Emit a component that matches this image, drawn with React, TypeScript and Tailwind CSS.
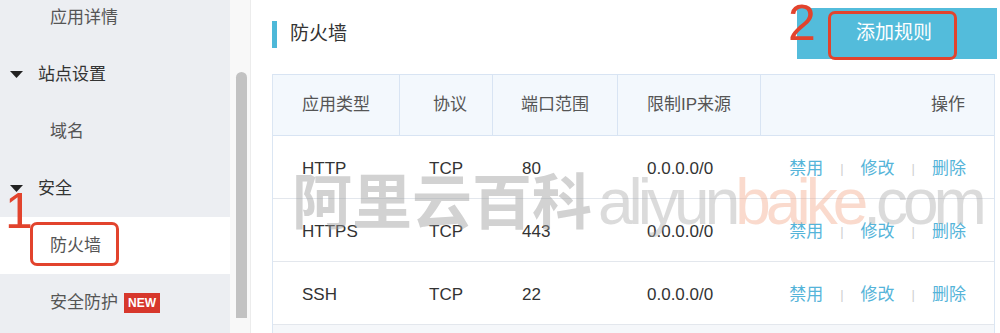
import React from "react";

const font = { fontFamily: '"Liberation Sans", "Noto Sans CJK SC", sans-serif' };

function Caret() {
  return (
    <svg width="13" height="7" viewBox="0 0 13 7" className="mr-[15px]">
      <path d="M0 0 L13 0 L6.5 7 Z" fill="#222" />
    </svg>
  );
}

function SideItem({
  label,
  level,
  selected,
  badge,
}: {
  label: string;
  level: 1 | 2;
  selected?: boolean;
  badge?: boolean;
}) {
  return (
    <div
      className={
        "flex h-[57px] items-center text-[17px] " +
        (selected ? "bg-white " : "") +
        (level === 1 ? "pl-[10px] text-[#333]" : "pl-[50px] text-[#555]")
      }
    >
      {level === 1 && <Caret />}
      <span>{label}</span>
      {badge && (
        <span className="ml-[6px] flex h-[20px] items-center bg-[#d7372c] px-[4px] text-[12px] font-bold leading-none text-white">
          NEW
        </span>
      )}
    </div>
  );
}

const rows = [
  { type: "HTTP", proto: "TCP", port: "80", ip: "0.0.0.0/0" },
  { type: "HTTPS", proto: "TCP", port: "443", ip: "0.0.0.0/0" },
  { type: "SSH", proto: "TCP", port: "22", ip: "0.0.0.0/0" },
];

export default function App() {
  return (
    <div className="relative flex h-[333px] w-[1000px] overflow-hidden bg-white" style={font}>
      {/* Sidebar */}
      <div className="w-[230px] shrink-0 bg-[#eceef2]">
        <div className="-mt-[11px]">
          <SideItem label="应用详情" level={2} />
          <SideItem label="站点设置" level={1} />
          <SideItem label="域名" level={2} />
          <SideItem label="安全" level={1} />
          <SideItem label="防火墙" level={2} selected />
          <SideItem label="安全防护" level={2} badge />
        </div>
      </div>

      {/* Scrollbar strip */}
      <div className="w-[21px] shrink-0 border-r border-[#ececec] bg-[#f8f8f8] pl-[6px] pt-[72px]">
        <div className="h-[246px] w-[11px] rounded-t-[6px] bg-[#c2c2c2]" />
      </div>

      {/* Main */}
      <div className="flex-1 pl-[21px] pr-[5px]">
        <div className="flex h-[74px] items-start justify-between pt-[8px]">
          <div className="mt-[12px] flex items-center">
            <div className="h-[27px] w-[5px] bg-[#4db8d8]" />
            <span className="ml-[13px] text-[19px] text-[#333]">防火墙</span>
          </div>
          <div className="-mr-[2px] flex h-[51px] w-[200px] items-center justify-center bg-[#53bcdb] pr-[6px] text-[19px] text-white">
            添加规则
          </div>
        </div>

        <div className="border-x border-[#dbe6f3]">
          {/* Header */}
          <div className="flex h-[62px] border-y border-[#d8e4f3] bg-[#f3f8fd] text-[17px] text-[#555]">
            <div className="flex w-[127px] items-center justify-center border-r border-[#d8e4f3]">应用类型</div>
            <div className="flex w-[93px] items-center justify-center border-r border-[#d8e4f3] pl-[8px]">协议</div>
            <div className="flex w-[125px] items-center justify-center border-r border-[#d8e4f3]">端口范围</div>
            <div className="flex w-[143px] items-center justify-center border-r border-[#d8e4f3]">限制IP来源</div>
            <div className="flex flex-1 items-center justify-end pr-[29px]">操作</div>
          </div>
          {rows.map((r) => (
            <div key={r.type} className="flex h-[63px] items-center border-b border-[#e3e7ed] pt-[3px] text-[17px] text-[#333]">
              <div className="w-[127px] pl-[29px]">{r.type}</div>
              <div className="w-[93px] pl-[29px]">{r.proto}</div>
              <div className="w-[125px] pl-[29px]">{r.port}</div>
              <div className="w-[143px] pl-[29px]">{r.ip}</div>
              <div className="flex flex-1 items-center justify-end pr-[28px] text-[#55b4d9]">
                <span>禁用</span>
                <span className="mx-[17px] text-[13px] text-[#cfcfcf]">|</span>
                <span>修改</span>
                <span className="mx-[17px] text-[13px] text-[#cfcfcf]">|</span>
                <span>删除</span>
              </div>
            </div>
          ))}
          <div className="h-[20px] bg-[#f5f7fa]" />
        </div>
      </div>

      {/* Annotations */}
      <div className="pointer-events-none absolute left-[30px] top-[222px] h-[44px] w-[89px] rounded-[7px] border-[3px] border-[#e2432d]" />
      <div className="pointer-events-none absolute left-[5px] top-[186px] text-[50px] font-light leading-none text-[#e2432d]">
        1
      </div>
      <div className="pointer-events-none absolute left-[828px] top-[11px] h-[49px] w-[129px] rounded-[7px] border-[3px] border-[#e2432d]" />
      <div className="pointer-events-none absolute left-[788px] top-0 text-[50px] font-light leading-[46px] text-[#e2432d]">
        2
      </div>

      {/* Watermark */}
      <div className="pointer-events-none absolute left-[292px] top-[168px] flex items-baseline whitespace-nowrap leading-none">
        <span
          className="text-[60px] font-bold text-[#9c9c9c] opacity-45"
          style={{ fontFamily: '"Noto Sans CJK SC", sans-serif' }}
        >
          阿里云百科
        </span>
        <span className="ml-[6px] text-[64px] tracking-[-5px] opacity-40">
          <span className="text-[#a8a8a8]">aliyun</span>
          <span className="text-[#f3a584]">baike</span>
          <span className="text-[#a8a8a8]">.com</span>
        </span>
      </div>
    </div>
  );
}
